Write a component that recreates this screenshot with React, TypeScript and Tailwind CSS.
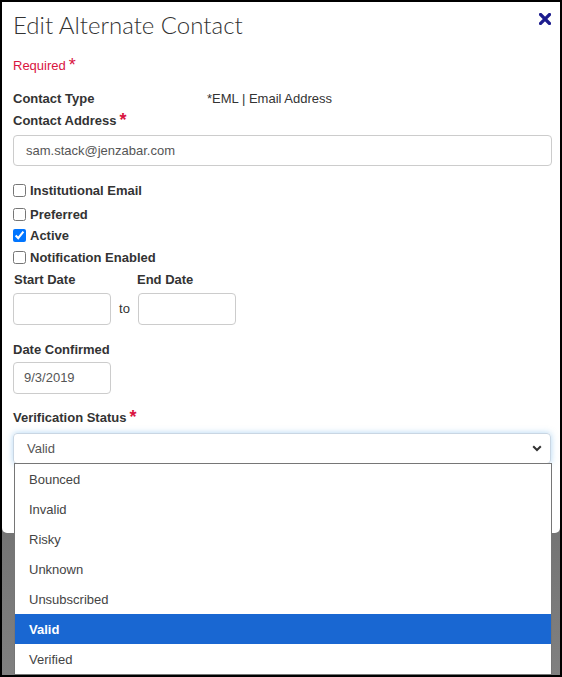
const options = ["Bounced", "Invalid", "Risky", "Unknown", "Unsubscribed", "Valid", "Verified"]

function Star() {
  return <span className="ml-[3px] self-start text-[18px] leading-[18px] text-[#d9143f]">*</span>
}

function Check({ label, checked, className }: { label: string; checked?: boolean; className: string }) {
  return (
    <label className={`flex h-[20px] items-center gap-[4px] pt-[1px] ${className}`}>
      <input type="checkbox" defaultChecked={checked} className="m-0 h-[13px] w-[13px]" />
      <span className="font-bold text-[#333]">{label}</span>
    </label>
  )
}

export default function App() {
  return (
    <div className="relative h-[677px] w-[562px] bg-black px-[2px] pt-[2px] text-[13px] [font-family:'Liberation_Sans',Arial,sans-serif]">
      <div className="flex h-[673px] flex-col bg-gradient-to-b from-[#4a4a4a] to-[#808080]">
        <div className="h-[531px] rounded-b-[5px] bg-white pl-[11px] pr-[8px]">
          <div className="mt-[7px] flex h-[32px] items-center justify-between">
            <h2 className="text-[24px] font-light text-[#333] [font-family:Lato,sans-serif]">Edit Alternate Contact</h2>
            <svg width="12" height="12" viewBox="0 0 12 12" className="mr-[1px] mt-[4px] self-start">
              <path d="M1.5 1.5 L10.5 10.5 M10.5 1.5 L1.5 10.5" stroke="#1c1c8e" strokeWidth="3.2" strokeLinecap="square" />
            </svg>
          </div>

          <p className="mt-[15px] flex h-[20px] items-center text-[13px] text-[#d9143f]">
            Required<Star />
          </p>

          <div className="mt-[13px] flex h-[20px] items-center text-[#333]">
            <span className="w-[194px] font-bold">Contact Type</span>
            <span>*EML | Email Address</span>
          </div>
          <div className="mt-[2px] flex h-[20px] items-center font-bold text-[#333]">
            Contact Address<Star />
          </div>
          <div className="mt-[4px] flex h-[31px] items-center rounded-[4px] border border-[#ccc] px-[12px] text-[#555]">
            sam.stack@jenzabar.com
          </div>

          <Check label="Institutional Email" className="mt-[14px]" />
          <Check label="Preferred" className="mt-[4px]" />
          <Check label="Active" checked className="mt-[1px]" />
          <Check label="Notification Enabled" className="mt-[2px]" />

          <div className="mt-[2px] flex h-[20px] items-center pt-[1px] font-bold text-[#333]">
            <span className="w-[124px] pl-[1px]">Start Date</span>
            <span>End Date</span>
          </div>
          <div className="mt-[4px] flex items-center">
            <div className="h-[32px] w-[98px] rounded-[4px] border border-[#ccc]" />
            <span className="w-[27px] text-center text-[#333]">to</span>
            <div className="h-[32px] w-[98px] rounded-[4px] border border-[#ccc]" />
          </div>

          <div className="mt-[14px] flex h-[20px] items-center pt-[1px] font-bold text-[#333]">Date Confirmed</div>
          <div className="mt-[3px] flex h-[32px] w-[98px] items-center rounded-[4px] border border-[#ccc] px-[10px] text-[#555]">
            9/3/2019
          </div>

          <div className="mt-[13px] flex h-[20px] items-center pt-[1px] font-bold text-[#333]">
            Verification Status<Star />
          </div>
          <div className="mr-[1px] mt-[6px] flex h-[31px] items-center justify-between rounded-[4px] border border-[#c9d6e3] pl-[13px] pr-[8px] text-[#555] shadow-[0_0_6px_rgba(102,175,233,0.5)]">
            <span>Valid</span>
            <svg width="10" height="7" viewBox="0 0 10 7">
              <path d="M1.2 1.2 L5 5 L8.8 1.2" fill="none" stroke="#333" strokeWidth="2" />
            </svg>
          </div>
        </div>
      </div>

      <ul className="absolute left-[14px] top-[463px] w-[538px] border border-[#767676] bg-white">
        {options.map((o) => (
          <li
            key={o}
            className={`flex h-[30px] items-center pl-[14px] pt-[1px] ${o === "Valid" ? "bg-[#1967d2] font-bold text-white" : "text-[#444]"}`}
          >
            {o}
          </li>
        ))}
      </ul>
    </div>
  )
}
